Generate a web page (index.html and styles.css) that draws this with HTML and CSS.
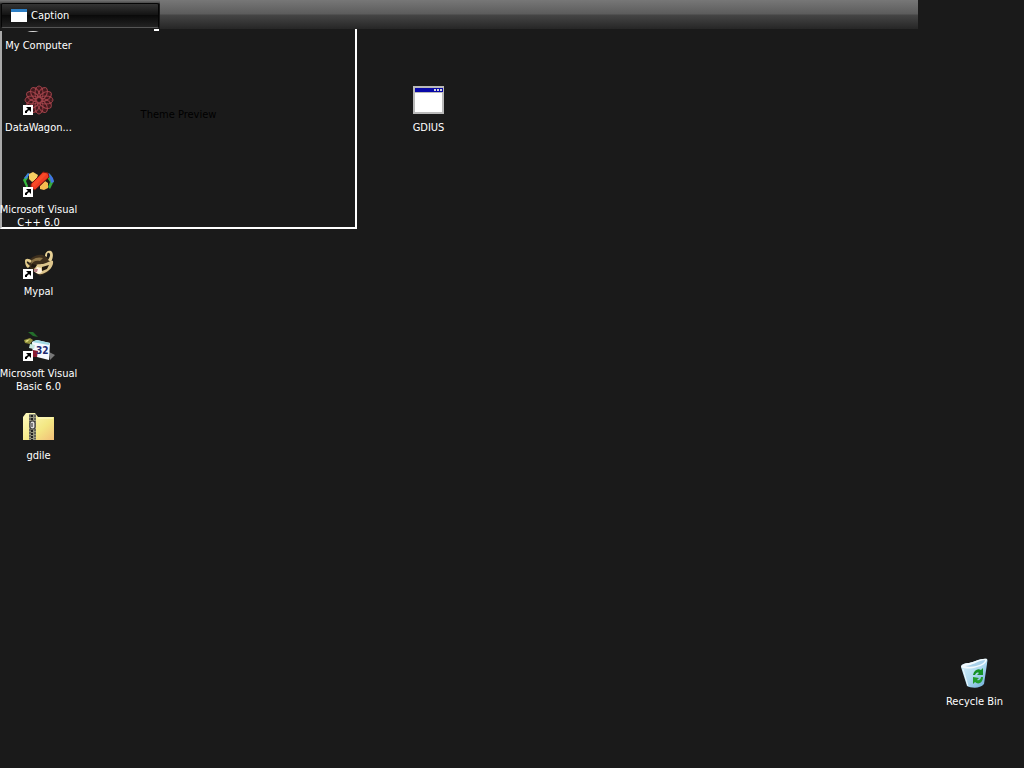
FILE: index.html
```html
<!DOCTYPE html>
<html lang="en">

<head>
    <meta charset="UTF-8">
    <meta name="viewport" content="width=device-width, initial-scale=1.0">
    <title>Desktop</title>
    <link rel="stylesheet" href="styles.css">
</head>

<body>
    <!-- arrow badge shared by all shortcuts -->
    <svg class="defs" aria-hidden="true">
        <symbol id="arrow" viewBox="0 0 10 10">
            <rect width="10" height="10" fill="#fff"/>
            <path d="M3 2h5v5L6 5 4 7v1H2V6l3-2z" fill="#000"/>
        </symbol>
    </svg>

    <main class="desktop">
        <section class="preview">Theme Preview</section>

        <div class="icons">
            <a class="icon" href="#">
                <svg viewBox="0 0 32 32">
                    <ellipse cx="10" cy="27" rx="8" ry="3" fill="#ddd"/>
                    <rect x="5" y="4" width="20" height="16" fill="#6a9bd0"/>
                </svg>
                <span>My Computer</span>
            </a>
            <a class="icon" href="#">
                <svg viewBox="0 0 32 32">
                    <circle cx="16" cy="16" r="13" fill="#43191d"/>
                    <g fill="none" stroke="#a4444c">
                        <g id="petals">
                            <ellipse cx="16" cy="9" rx="4" ry="7"/>
                            <ellipse cx="16" cy="23" rx="4" ry="7"/>
                            <ellipse cx="9" cy="16" rx="7" ry="4"/>
                            <ellipse cx="23" cy="16" rx="7" ry="4"/>
                        </g>
                        <use href="#petals" transform="rotate(30 16 16)"/>
                        <use href="#petals" transform="rotate(60 16 16)"/>
                        <circle cx="16" cy="16" r="10" stroke="#6d252d" stroke-dasharray="2 2"/>
                        <circle cx="16" cy="16" r="13" stroke="#7d2f36" stroke-dasharray="1 2"/>
                    </g>
                    <circle cx="16" cy="16" r="2" fill="#321317"/>
                    <use href="#arrow" y="21" width="10" height="10"/>
                </svg>
                <span>DataWagon...</span>
            </a>
            <a class="icon" href="#">
                <svg viewBox="0 0 32 32">
                    <path d="M0 14l5-7v5l-2 3 2 5-1 3z" fill="#35b83d"/>
                    <path d="M1 12l4-5 2 1-4 5z" fill="#3f7ee0"/>
                    <path d="M6 8l4-2 5 3-2 5-4 2-3-3z" fill="#f6cf62"/>
                    <path d="M25 7l3 2 3 6-4 8-2-2 2-5-4-6z" fill="#35a83d"/>
                    <path d="M26 7l4 5 1 4-3 1-1-5-3-4z" fill="#3f72e5"/>
                    <path d="M17 20l5-5 3 2v5l-4 2-4-1z" fill="#f7bd50"/>
                    <path d="M8 18L20 6l5 1 1 4-14 13-4-2z" fill="#ee3c22" stroke="#7d160d"/>
                    <path d="M9 18L21 7l3 1-13 13z" fill="#f84a28"/>
                    <use href="#arrow" y="21" width="10" height="10"/>
                </svg>
                <span>Microsoft Visual<br>C++ 6.0</span>
            </a>
            <a class="icon" href="#">
                <svg viewBox="0 0 32 32">
                    <path d="M5 14c3-5 9-8 15-7l6 4 4 5-5 8-8 4-9-6z" fill="#3d2e1c"/>
                    <path d="M22 8c0-4 3-6 6-5 3 2 2 7 0 11l-3-2c2-3 3-6 1-7s-2 2-2 4z" fill="#e7d095"/>
                    <path d="M2 13c0-3 4-3 7 0l-2 2c-2-2-4-2-3 0l3 3-2 2c-2-1-3-4-3-7z" fill="#e2cb8b"/>
                    <path d="M9 12c4-3 8-3 11-2l-3 3c-4-1-6 0-9 3z" fill="#8c7447"/>
                    <path d="M12 18c3-3 7-1 11-3 3-1 6-3 7-2 1 5-4 11-11 13-6 1-9-3-7-8z" fill="#ddc58c"/>
                    <path d="M19 19l7-2-2 4-5 2zM9 16l5 1-2 3-4-1z" fill="#21180f"/>
                    <path d="M14 19l4 1 1 4-3 2-4-2z" fill="#fff2df"/>
                    <path d="M11 21h4l-1 3h-3z" fill="#b98286"/>
                    <use href="#arrow" y="21" width="10" height="10"/>
                </svg>
                <span>Mypal</span>
            </a>
            <a class="icon" href="#">
                <svg viewBox="0 0 32 32">
                    <path d="M5 2h5l5 5-5-1z" fill="#236e2b"/>
                    <path d="M1 10l6-2 3 2-3 4-5-1z" fill="#91903b"/>
                    <path d="M2 11l5-2-3 3z" fill="#e9e58a"/>
                    <path d="M8 14l4-4 2 1-5 5z" fill="#3a8c42"/>
                    <path d="M26 22l6 3-5 5z" fill="#777"/>
                    <path d="M9 12l5-2 13 3-1 17-16-4z" fill="#f6f9ff"/>
                    <path d="M9 12l5-2 13 3-1 2z" fill="#9fd8e2"/>
                    <path d="M7 14l5 1-1 4-5-1z" fill="#c7e7df"/>
                    <path d="M10 20l5 1-1 6h-5z" fill="#8a1c30"/>
                    <text x="13" y="24" font-size="10" font-weight="bold" fill="#202a70">32</text>
                    <use href="#arrow" y="21" width="10" height="10"/>
                </svg>
                <span>Microsoft Visual<br>Basic 6.0</span>
            </a>
            <a class="icon" href="#">
                <svg viewBox="0 0 32 32">
                    <defs>
                        <linearGradient id="folder" x2="1" y2="1">
                            <stop stop-color="#fffbc0"/>
                            <stop offset=".6" stop-color="#f3e783"/>
                            <stop offset="1" stop-color="#f2be78"/>
                        </linearGradient>
                    </defs>
                    <path d="M0 28V5l3-4h9l3 4h16v23z" fill="url(#folder)"/>
                    <path d="M15 6h15" stroke="#fffccd"/>
                    <rect x="6" y="2" width="7" height="26" fill="#969681"/>
                    <path d="M7 3v7M12 3v7M7 17v10M12 17v10" stroke="#333" stroke-dasharray="2 1"/>
                    <path d="M9 3v25" stroke="#222" stroke-width="2" stroke-dasharray="2 1"/>
                    <rect x="7" y="9" width="5" height="8" rx="2" fill="#ddd" stroke="#222"/>
                    <path d="M9 11v4" stroke="#222"/>
                </svg>
                <span>gdile</span>
            </a>
        </div>

        <a class="icon gdius" href="#">
            <svg viewBox="0 0 32 32" shape-rendering="crispEdges">
                <rect y="2" width="31" height="28" fill="#b9b9b9"/>
                <rect x="2" y="4" width="28" height="4" fill="#0808a8"/>
                <rect x="2" y="9" width="27" height="19" fill="#fff"/>
                <path d="M21 5h2v2h-2zM24 5h2v2h-2zM27 5h2v2h-2z" fill="#d5d5d5"/>
            </svg>
            <span>GDIUS</span>
        </a>

        <a class="icon recycle" href="#">
            <svg viewBox="0 0 32 32">
                <defs>
                    <linearGradient id="bin" x2="1" y2="1">
                        <stop stop-color="#d9f2fc"/>
                        <stop offset=".5" stop-color="#b2dcf1"/>
                        <stop offset="1" stop-color="#68a8d6"/>
                    </linearGradient>
                </defs>
                <path d="M2 9c0-3 4-4 8-4 5-1 12-5 18-4 1 1 0 3 0 5l-3 20c-4 5-13 4-17 2z" fill="url(#bin)"/>
                <path d="M2 9c1-3 5-4 8-4 6-1 12-5 18-4 0 4-5 7-10 8-6 2-12 2-16 0z" fill="#f3fbff"/>
                <path d="M6 8c7 0 12-5 20-6 0 3-5 5-9 6s-8 1-11 0z" fill="#a8d1ea"/>
                <path d="M4 11l5 17" stroke="#eefaff"/>
                <path d="M14 17c1-5 5-7 8-5l2-2v7h-6l2-2c-2-1-3 0-4 2z" fill="#159126"/>
                <path d="M24 19c0 6-5 8-8 5l-2 2v-7l6 1-2 2c2 1 4-1 4-3z" fill="#229d2d"/>
            </svg>
            <span>Recycle Bin</span>
        </a>
    </main>

    <header class="taskbar">
        <div class="slot">
            <button class="task">
                <svg viewBox="0 0 16 14">
                    <rect width="16" height="13" fill="#fff"/>
                    <rect width="16" height="3" fill="#2e7fc4"/>
                </svg>
                Caption
            </button>
        </div>
    </header>
</body>

</html>
```
FILE: styles.css
```css
:root {
    --bg: #1a1a1a;
    --text: #ffffff;
}

* {
    margin: 0;
    padding: 0;
    box-sizing: border-box;
}

body {
    background-color: var(--bg);
    color: var(--text);
    font-family: "DejaVu Sans Condensed", "Noto Sans", sans-serif;
    font-size: 11px;
    line-height: 13px;
}

.defs {
    position: absolute;
    width: 0;
    height: 0;
}

.desktop {
    position: relative;
    min-height: 100vh;
    overflow: hidden;
}

.icons {
    position: relative;
    display: flex;
    flex-direction: column;
    width: 77px;
    padding-top: 2px;
}

.icon {
    display: flex;
    flex-direction: column;
    align-items: center;
    gap: 5px;
    width: 77px;
    height: 82px;
    color: var(--text);
    text-align: center;
    text-decoration: none;
    white-space: nowrap;
}

.icon svg {
    flex: none;
    width: 32px;
    height: 32px;
}

.gdius {
    position: absolute;
    top: 84px;
    left: 390px;
}

.recycle {
    position: absolute;
    right: 11px;
    bottom: 28px;
}

/* preview window, its top edge is under the taskbar */
.preview {
    position: absolute;
    top: 0;
    left: 0;
    display: flex;
    align-items: center;
    justify-content: center;
    width: 357px;
    height: 229px;
    border: 2px solid #fff;
    border-left-color: #aaa;
    color: #000;
}

.taskbar {
    position: fixed;
    top: 0;
    left: 0;
    width: calc(100% - 106px);
    height: 29px;
    background: linear-gradient(#777 0, #5c5c5c 14px, #454545 15px, #262626 29px);
}

.slot {
    width: 160px;
    height: 31px;
    padding: 3px 1px 0;
    background: linear-gradient(#777 0, #4a4a4a 3px, #1a1a1a 4px);
}

/* light bit of the slot's bottom right corner */
.slot::after {
    content: "";
    display: block;
    width: 5px;
    height: 2px;
    margin: 1px 0 0 auto;
    background: #fff;
}

.task {
    display: flex;
    align-items: center;
    gap: 4px;
    width: 100%;
    height: 25px;
    padding: 0 9px;
    border: 1px solid #050505;
    border-bottom-color: #555;
    border-radius: 2px;
    background: linear-gradient(#343434, #111 50%, #0a0a0a 50%, #222);
    color: var(--text);
    font: inherit;
}

.task svg {
    width: 16px;
    height: 14px;
}
```
